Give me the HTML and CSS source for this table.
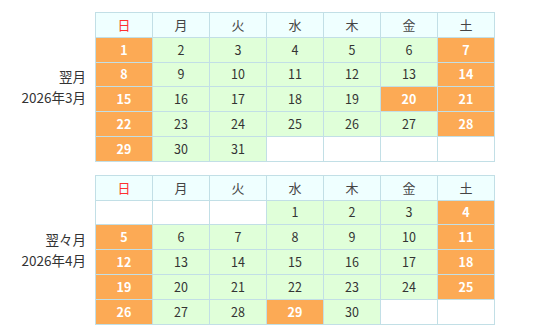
FILE: index.html
```html
<!DOCTYPE html>
<html lang="ja">
<head>
<meta charset="utf-8">
<link rel="stylesheet" href="styles.css">
</head>
<body>
<div class="page">
  <section class="month">
    <div class="label"><div>翌月</div><div>2026年3月</div></div>
    <table class="cal">
      <tr class="head"><th class="sun">日</th><th>月</th><th>火</th><th>水</th><th>木</th><th>金</th><th>土</th></tr>
      <tr><td class="hol">1</td><td class="on">2</td><td class="on">3</td><td class="on">4</td><td class="on">5</td><td class="on">6</td><td class="hol">7</td></tr>
      <tr><td class="hol">8</td><td class="on">9</td><td class="on">10</td><td class="on">11</td><td class="on">12</td><td class="on">13</td><td class="hol">14</td></tr>
      <tr><td class="hol">15</td><td class="on">16</td><td class="on">17</td><td class="on">18</td><td class="on">19</td><td class="hol">20</td><td class="hol">21</td></tr>
      <tr><td class="hol">22</td><td class="on">23</td><td class="on">24</td><td class="on">25</td><td class="on">26</td><td class="on">27</td><td class="hol">28</td></tr>
      <tr><td class="hol">29</td><td class="on">30</td><td class="on">31</td><td></td><td></td><td></td><td></td></tr>
    </table>
  </section>
  <section class="month">
    <div class="label"><div>翌々月</div><div>2026年4月</div></div>
    <table class="cal">
      <tr class="head"><th class="sun">日</th><th>月</th><th>火</th><th>水</th><th>木</th><th>金</th><th>土</th></tr>
      <tr><td></td><td></td><td></td><td class="on">1</td><td class="on">2</td><td class="on">3</td><td class="hol">4</td></tr>
      <tr><td class="hol">5</td><td class="on">6</td><td class="on">7</td><td class="on">8</td><td class="on">9</td><td class="on">10</td><td class="hol">11</td></tr>
      <tr><td class="hol">12</td><td class="on">13</td><td class="on">14</td><td class="on">15</td><td class="on">16</td><td class="on">17</td><td class="hol">18</td></tr>
      <tr><td class="hol">19</td><td class="on">20</td><td class="on">21</td><td class="on">22</td><td class="on">23</td><td class="on">24</td><td class="hol">25</td></tr>
      <tr><td class="hol">26</td><td class="on">27</td><td class="on">28</td><td class="hol">29</td><td class="on">30</td><td></td><td></td></tr>
    </table>
  </section>
</div>
</body>
</html>
```
FILE: styles.css
```css
html, body {
  margin: 0;
  padding: 0;
  background: #ffffff;
}
body {
  font-family: "Noto Sans CJK JP", "Noto Sans", sans-serif;
  font-size: 12px;
  color: #333333;
}
.page {
  display: flex;
  flex-direction: column;
  gap: 13px;
  padding: 12px 0 0 0;
}
.month {
  display: flex;
  align-items: center;
}
.label {
  width: 86px;
  box-sizing: border-box;
  text-align: right;
  font-size: 13.5px;
  line-height: 21px;
  margin-right: 9px;
  color: #333333;
}
.cal {
  border-collapse: collapse;
  table-layout: fixed;
  width: 400px;
}
.cal th, .cal td {
  border: 1px solid #c2dfe6;
  width: 56px;
  height: 23.8px;
  padding: 0;
  text-align: center;
  vertical-align: middle;
  font-size: 12.5px;
  line-height: 16px;
}
.cal th {
  background: #efffff;
  font-weight: normal;
  font-size: 13px;
  color: #444444;
}
.cal th.sun {
  color: #ff3030;
}
.cal td.on {
  background: #e0ffd9;
}
.cal td.hol {
  background: #fcaa55;
  color: #ffffff;
  font-weight: bold;
}
```
